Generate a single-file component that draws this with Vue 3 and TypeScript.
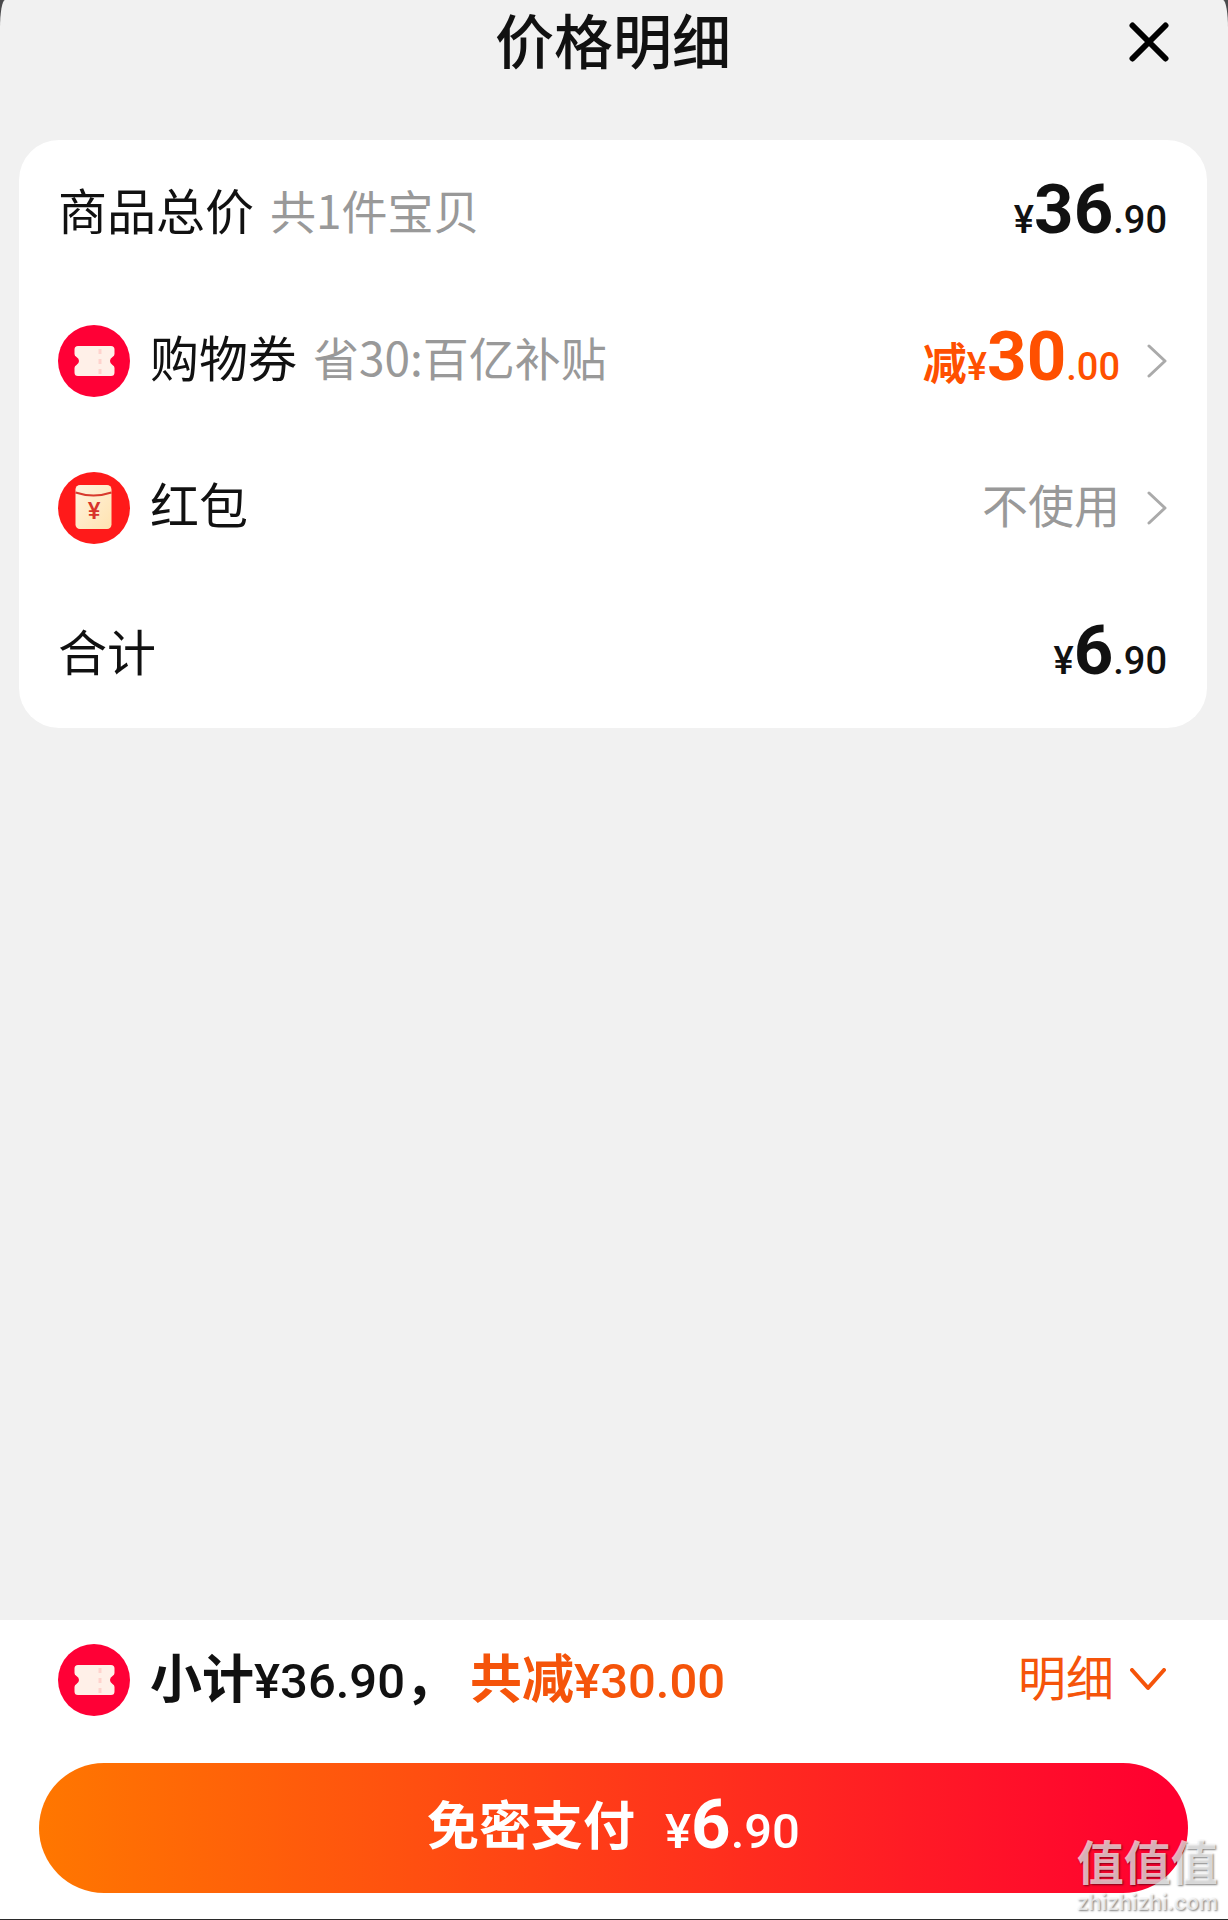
<script setup lang="ts">
import { ref } from 'vue'

interface Amount {
  whole: string
  cents: string
}

interface PriceRow {
  id: string
  label: string
  note?: string
  icon?: 'ticket' | 'packet'
  prefix?: string
  amount?: Amount
  text?: string
  link?: boolean
}

const rows: PriceRow[] = [
  { id: 'goods', label: '商品总价', note: '共1件宝贝', amount: { whole: '36', cents: '.90' } },
  {
    id: 'coupon',
    label: '购物券',
    note: '省30:百亿补贴',
    icon: 'ticket',
    prefix: '减',
    amount: { whole: '30', cents: '.00' },
    link: true,
  },
  { id: 'packet', label: '红包', icon: 'packet', text: '不使用', link: true },
  { id: 'total', label: '合计', amount: { whole: '6', cents: '.90' } },
]

// Outline of the coupon glyph, shared by the list row and the footer
const ticketPath =
  'M20 21H53Q56.500 21 56.500 24.500V29Q56.500 31 54.500 32Q52 33.500 52 36T54.500 40Q56.500 41 56.500 43V47.500Q56.500 51 53 51H20Q16.500 51 16.500 47.500V43Q16.500 41 18.500 40Q21 38.500 21 36T18.500 32Q16.500 31 16.500 29V24.500Q16.500 21 20 21Z'

const open = ref(true)
</script>

<template>
  <div class="page">
    <main class="sheet">
      <header class="head">
        <h1 class="title">价格明细</h1>
        <button class="close" type="button" aria-label="关闭">
          <svg viewBox="0 0 40 40" width="40" height="40">
            <path d="M3.5 3.5 36.5 36.5M36.5 3.5 3.5 36.5" fill="none" stroke="#000" stroke-width="6" stroke-linecap="round" />
          </svg>
        </button>
      </header>

      <section class="card">
        <div v-for="row in rows" :key="row.id" class="row">
          <svg v-if="row.icon === 'ticket'" class="badge" viewBox="0 0 72 72">
            <circle cx="36" cy="36" r="36" fill="#ff0036" />
            <path :d="ticketPath" fill="#fff0e8" />
            <path d="M42 24V49" stroke="#ffd3cd" stroke-width="3" stroke-dasharray="5 5" />
          </svg>
          <svg v-else-if="row.icon === 'packet'" class="badge" viewBox="0 0 72 72">
            <defs>
              <linearGradient id="cream" x1="0" y1="0" x2="1" y2="1">
                <stop offset="0" stop-color="#fff3df" />
                <stop offset="1" stop-color="#ffe3b0" />
              </linearGradient>
            </defs>
            <circle cx="36" cy="36" r="36" fill="#ff1a1a" />
            <rect x="17.500" y="13" width="36" height="44" rx="4.500" fill="url(#cream)" />
            <path d="M17.500 20.500Q35.500 26.500 53.500 20.500" fill="none" stroke="#d83a2e" stroke-width="2" />
            <text class="packet-yen" x="36" y="47" text-anchor="middle">¥</text>
          </svg>
          <span class="label">{{ row.label }}</span>
          <span v-if="row.note" class="note">{{ row.note }}</span>
          <component :is="row.link ? 'button' : 'span'" class="value" :type="row.link ? 'button' : undefined">
            <span v-if="row.amount" class="price" :class="{ off: row.prefix }">
              <span v-if="row.prefix" class="prefix">{{ row.prefix }}</span><span class="small">¥</span><span class="big">{{ row.amount.whole }}</span><span class="small">{{ row.amount.cents }}</span>
            </span>
            <span v-else class="muted">{{ row.text }}</span>
            <svg v-if="row.link" class="chevron" viewBox="0 0 20 34" width="20" height="34">
              <path d="M2 2 18 17 2 32" fill="none" stroke="#aaa" stroke-width="3" stroke-linecap="round" stroke-linejoin="round" />
            </svg>
          </component>
        </div>
      </section>
    </main>

    <footer class="foot">
      <div class="summary">
        <svg class="badge" viewBox="0 0 72 72">
          <circle cx="36" cy="36" r="36" fill="#ff0036" />
          <path :d="ticketPath" fill="#fff0e8" />
          <path d="M42 24V49" stroke="#ffd3cd" stroke-width="3" stroke-dasharray="5 5" />
        </svg>
        <span class="sum"><span>小计</span><span class="num">¥36.90</span><span>，</span></span>
        <span class="sum save"><span>共减</span><span class="num">¥30.00</span></span>
        <button class="detail" type="button" :aria-expanded="open" @click="open = !open">
          <span class="detail-label">明细</span>
          <svg viewBox="0 0 36 24" width="36" height="24">
            <path d="M2 2 18 20 34 2" fill="none" stroke="#f5540a" stroke-width="4" stroke-linecap="round" stroke-linejoin="round" />
          </svg>
        </button>
      </div>
      <button class="pay" type="button">
        <span class="pay-label">免密支付</span>
        <span class="pay-price"><span class="num">¥</span><span class="big">6</span><span class="num">.90</span></span>
      </button>
      <div class="mark" aria-hidden="true">
        <span class="mark-name">值值值</span>
        <span class="mark-site">zhizhizhi.com</span>
      </div>
    </footer>
  </div>
</template>

<style>
body {
  margin: 0;
  background: #4a4a4c;
}
</style>

<style scoped>
.page {
  display: flex;
  flex-direction: column;
  min-height: 100vh;
  box-sizing: border-box;
  border-bottom: 1px solid #2a2a2a;
  font-family: "Noto Sans CJK SC", sans-serif;
  color: #111;
}
button {
  margin: 0;
  padding: 0;
  border: 0;
  background: none;
  font: inherit;
  color: inherit;
  cursor: pointer;
}
svg {
  display: block;
  flex: none;
}
.sheet {
  flex: 1;
  padding: 0 21px 0 19px;
  background: #f1f1f1;
  border-radius: 5px 5px 0 0 / 28px 28px 0 0;
}
.head {
  display: grid;
  grid-template-columns: 1fr auto 1fr;
  align-items: center;
  height: 84px;
  margin-bottom: 56px;
  padding: 0 38px;
}
.title {
  grid-column: 2;
  margin: 0;
  padding-bottom: 6px;
  font-size: 59px;
  line-height: 72px;
  font-weight: 500;
}
.close {
  justify-self: end;
}
.card {
  border-radius: 40px;
  background: #fff;
}
.row {
  display: flex;
  align-items: center;
  height: 147px;
  padding: 0 40px 0 39px;
  white-space: nowrap;
}
.badge {
  width: 72px;
  height: 72px;
  margin-right: 20px;
}
.packet-yen {
  font: 500 24px Roboto, sans-serif;
  fill: #d8332b;
}
.label,
.note,
.muted,
.detail-label,
.pay-label {
  padding-bottom: 10px;
}
.label {
  font-size: 49px;
  line-height: 72px;
}
.note,
.muted {
  font-size: 46px;
  line-height: 72px;
  color: #999;
}
.note {
  margin-left: 16px;
}
.value {
  display: flex;
  align-items: center;
  margin-left: auto;
}
.chevron {
  margin-left: 27px;
}
.price {
  display: flex;
  align-items: baseline;
  padding-top: 2px;
  line-height: 72px;
}
.off {
  color: #ff5000;
}
.prefix {
  font-size: 44px;
  font-weight: 700;
}
.small,
.big,
.num {
  font-family: Roboto, "Noto Sans CJK SC", sans-serif;
  font-weight: 500;
}
.small {
  font-size: 38px;
}
.big {
  font-size: 69px;
  font-weight: 700;
}
.foot {
  position: relative;
  padding: 24px 40px 26px 39px;
  background: #fff;
}
.summary {
  display: flex;
  align-items: center;
  height: 72px;
  margin-bottom: 47px;
  padding: 0 22px 0 19px;
  white-space: nowrap;
}
.sum {
  display: flex;
  align-items: baseline;
  padding-bottom: 2px;
  font-size: 52px;
  line-height: 72px;
  font-weight: 700;
}
.num {
  font-size: 49px;
}
.save,
.detail {
  color: #f5540a;
}
.save {
  margin-left: 13px;
}
.detail {
  display: flex;
  align-items: center;
  gap: 16px;
  margin-left: auto;
  font-size: 48px;
  line-height: 72px;
}
.pay {
  display: flex;
  align-items: center;
  justify-content: center;
  gap: 30px;
  width: 100%;
  height: 130px;
  border-radius: 65px;
  background: linear-gradient(90deg, #ff7700, #ff0030 98%);
  color: #fff;
  line-height: 100px;
  white-space: nowrap;
}
.pay-label {
  font-size: 52px;
  font-weight: 700;
}
.pay-price {
  display: flex;
  align-items: baseline;
}
.mark {
  position: absolute;
  right: 10px;
  bottom: 3px;
  display: flex;
  flex-direction: column;
  align-items: center;
  color: rgba(255, 255, 255, 0.7);
  text-shadow: 1px 1px 2px rgba(0, 0, 0, 0.5);
  pointer-events: none;
}
.mark-name {
  font-size: 47px;
  line-height: 60px;
  font-weight: 700;
}
.mark-site {
  font-family: Inter, sans-serif;
  font-size: 21px;
  line-height: 26px;
  font-weight: 600;
}
</style>
